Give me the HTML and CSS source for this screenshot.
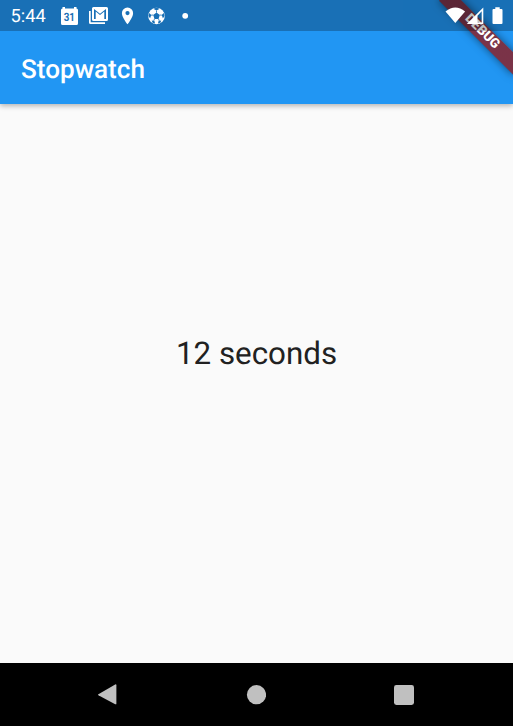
FILE: index.html
```html
<!DOCTYPE html>
<html lang="en">
<head>
<meta charset="utf-8">
<title>Stopwatch</title>
<link rel="stylesheet" href="styles.css">
</head>
<body>
<div class="screen">
  <header class="top">
    <div class="status">
      <span class="clock">5:44</span>
      <svg class="notifications" width="140" height="31" viewBox="56 0 140 31" fill="#fff">
        <path d="M62.500 8.500V7h2.500v1.500h9V7h2.500v1.500a1.500 1.500 0 0 1 1.500 1.500v13.500a1.500 1.500 0 0 1-1.500 1.500h-14a1.500 1.500 0 0 1-1.500-1.500V10a1.500 1.500 0 0 1 1.500-1.500z"/>
        <text class="date" x="69.300" y="21.200" text-anchor="middle" textLength="11.200" lengthAdjust="spacingAndGlyphs">31</text>
        <path d="M89 11h1.700v11.300H105V24H90.500a1.500 1.500 0 0 1-1.500-1.500z"/>
        <path fill-rule="evenodd" d="M93.500 7h13a1.500 1.500 0 0 1 1.500 1.500v11a1.500 1.500 0 0 1-1.500 1.500h-13a1.500 1.500 0 0 1-1.500-1.500v-11A1.500 1.500 0 0 1 93.500 7zM94 9v10h1.700v-7.500l4.300 3.600 4.300-3.600V19h1.700V9l-6 4.800z"/>
        <path fill-rule="evenodd" d="M127.500 7.500a5.600 5.600 0 0 0-5.600 5.700c0 4.300 5.600 11 5.600 11s5.600-6.700 5.600-11a5.600 5.600 0 0 0-5.600-5.700zm0 3.500a2.100 2.100 0 1 1 0 4.200 2.100 2.100 0 0 1 0-4.200z"/>
        <circle cx="156.500" cy="16" r="8.300"/>
        <g class="ball-patches">
          <path d="M156.500 12.600l3.300 2.400-1.300 3.900h-4l-1.300-3.900zM153.200 8.800l3.300 1.800 3.300-1.800-3.300-1zM149.200 13.100l2.100 2-1.200 3.200-1.700-2.300zM163.800 13.100l-2.100 2 1.200 3.200 1.700-2.300zM151.700 20.600l2.700.3.700 2.600-2.500-.8zM161.300 20.600l-2.700.3-.7 2.600 2.500-.8z"/>
          <path class="seams" d="M156.500 12.600v-2M153.200 15l-2 .2M159.800 15l2 .2M154.500 18.900l-.8 2M158.500 18.900l.8 2"/>
        </g>
        <circle cx="185.200" cy="15.800" r="2.900"/>
      </svg>
    </div>
    <h1 class="title">Stopwatch</h1>
  </header>
  <main class="content">12 seconds</main>
  <nav class="navigation">
    <svg width="20" height="22" viewBox="0 0 20 22"><path d="M.4 10.300L17.200.5q1.200-.5 1.200.7v18.300q0 1.200-1.200.7L.4 11.300q-.8-.5 0-1z"/></svg>
    <svg width="20" height="20" viewBox="0 0 20 20"><circle cx="10.500" cy="9.700" r="9.600"/></svg>
    <svg width="20" height="20" viewBox="0 0 20 20"><rect width="20" height="20" rx="2.400"/></svg>
  </nav>
  <div class="debug-corner"><div class="debug-banner">DEBUG</div><div class="status-scrim"></div></div>
  <svg class="system-icons" width="73" height="31" viewBox="440 0 73 31" fill="#fff">
    <path d="M455.300 23L445.500 11.500q9.800-8 19.600 0z"/>
    <path fill-rule="evenodd" d="M483.300 7.500V24h-16.500zM481.700 11.300l-4.200 4.400v6.800h4.200z"/>
    <path d="M495.300 7.200h4.400v1.700h1.800a1 1 0 0 1 1 1V23a1 1 0 0 1-1 1h-8a1 1 0 0 1-1-1V9.900a1 1 0 0 1 1-1h1.800z"/>
  </svg>
</div>
</body>
</html>
```

FILE: styles.css
```css
* {
  box-sizing: border-box;
}

body {
  margin: 0;
  font-family: Roboto, sans-serif;
  text-rendering: geometricPrecision;
}

.screen {
  position: relative;
  display: flex;
  flex-direction: column;
  width: 513px;
  height: 726px;
  overflow: hidden;
  background: #fafafa;
}

.top {
  height: 104px;
  background: #2196f3;
  box-shadow: 0 2px 5px rgba(0, 0, 0, .28);
}

.status {
  display: flex;
  align-items: center;
  width: 403px;
  height: 31px;
  padding-left: 10.500px;
  background: #1970b6;
  color: #fff;
}

.clock {
  width: 45.500px;
  padding-top: 2px;
  font-size: 18.300px;
  line-height: 29px;
}

.date {
  fill: #1970b6;
  font-size: 11.500px;
  font-weight: 700;
}

.ball-patches {
  fill: #1970b6;
}

.seams {
  stroke: #1970b6;
  stroke-width: .8;
}

.title {
  margin: 0;
  padding: 3px 0 0 21px;
  color: #fff;
  font-size: 26.100px;
  font-weight: 500;
  line-height: 73px;
}

.content {
  display: flex;
  flex: 1;
  align-items: center;
  justify-content: center;
  padding-bottom: 61px;
  color: #212121;
  font-size: 31.350px;
}

.navigation {
  display: flex;
  align-items: center;
  justify-content: space-between;
  height: 63px;
  padding: 0 99px 0 98px;
  background: #000;
  fill: #c0c0c0;
}

.debug-corner {
  position: absolute;
  top: 0;
  right: 0;
  width: 110px;
  height: 104px;
  overflow: hidden;
}

.debug-banner {
  position: absolute;
  top: 36.600px;
  left: 57.800px;
  width: 104.500px;
  height: 15.700px;
  transform: rotate(45deg);
  transform-origin: 52.200px -36.600px;
  background: linear-gradient(rgba(183, 28, 28, .627), rgba(183, 28, 28, .627)), rgba(0, 0, 0, .4);
  box-shadow: 0 0 8px rgba(0, 0, 0, .5);
  color: #fff;
  font-size: 13.300px;
  font-weight: 900;
  line-height: 15.700px;
  text-align: center;
}

.status-scrim {
  position: absolute;
  top: 0;
  right: 0;
  width: 110px;
  height: 31px;
  background: rgba(0, 0, 0, .25);
}

.system-icons {
  position: absolute;
  top: 0;
  right: 0;
}
```
